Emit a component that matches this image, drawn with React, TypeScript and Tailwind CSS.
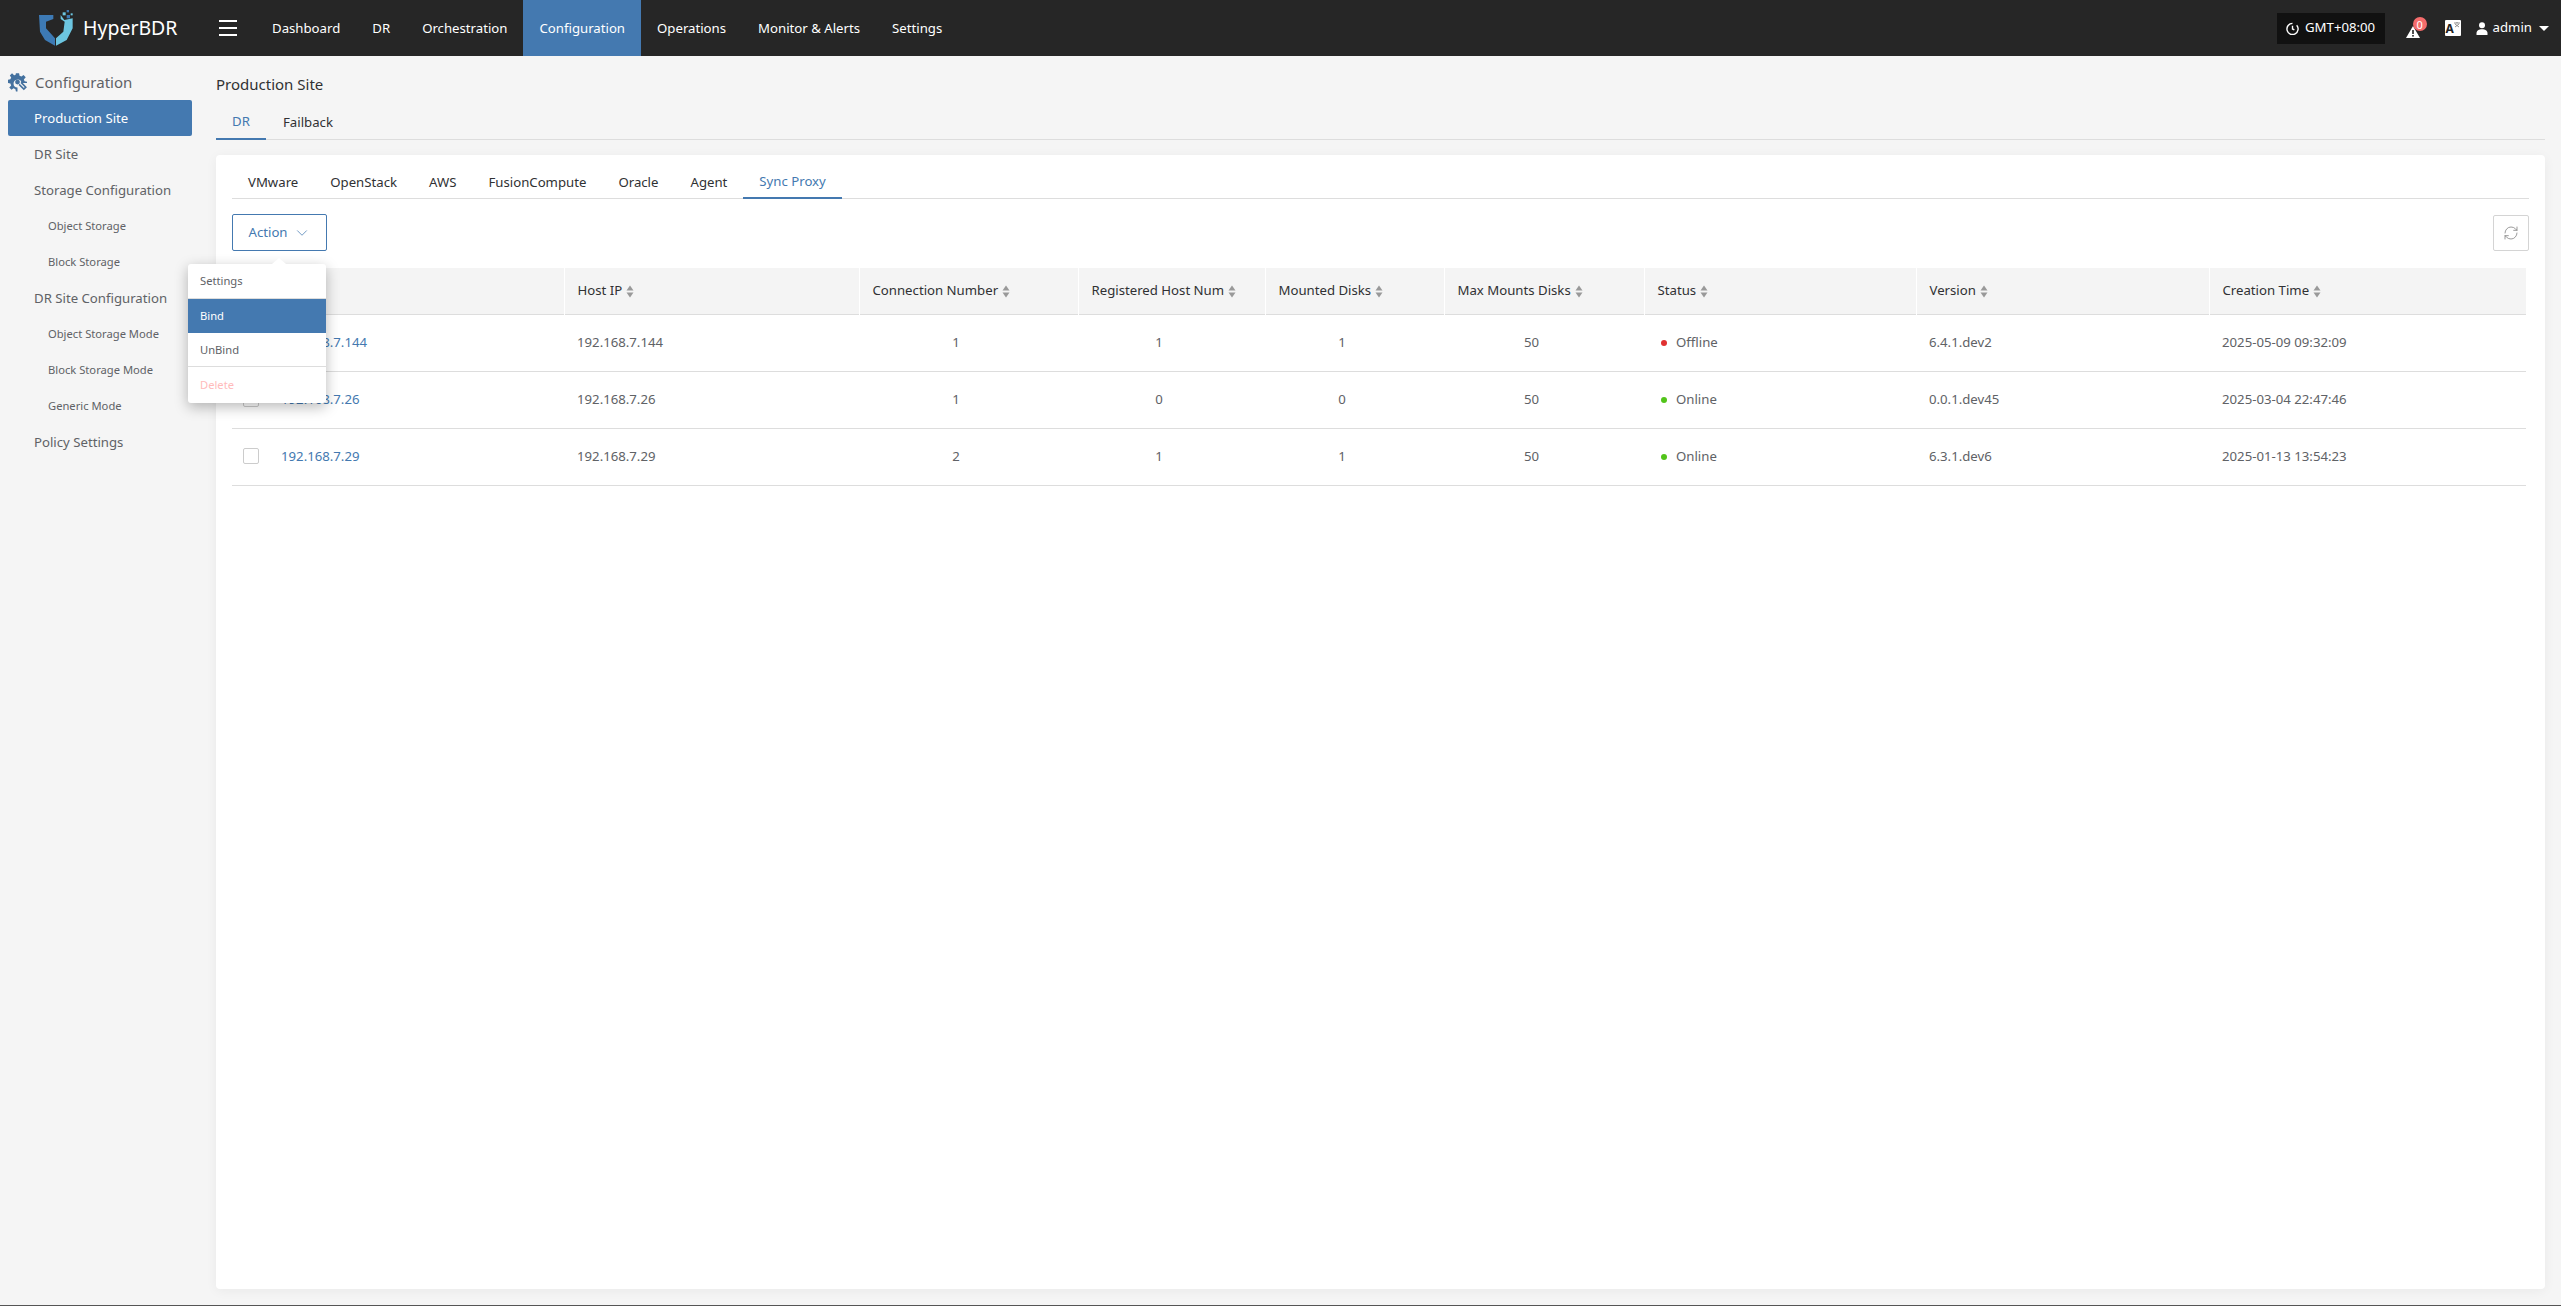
import { ChevronDown, RefreshCw } from "lucide-react";

const columns = [
  { title: "Name", width: "w-[332px]" },
  { title: "Host IP", width: "w-[295px]" },
  { title: "Connection Number", width: "w-[219px]" },
  { title: "Registered Host Num", width: "w-[187px]" },
  { title: "Mounted Disks", width: "w-[179px]" },
  { title: "Max Mounts Disks", width: "w-[200px]" },
  { title: "Status", width: "w-[272px]" },
  { title: "Version", width: "w-[293px]" },
  { title: "Creation Time", width: "" },
];

const rows = [
  { name: "192.168.7.144", conn: 1, hosts: 1, disks: 1, max: 50, online: false, version: "6.4.1.dev2", time: "2025-05-09 09:32:09" },
  { name: "192.168.7.26", conn: 1, hosts: 0, disks: 0, max: 50, online: true, version: "0.0.1.dev45", time: "2025-03-04 22:47:46" },
  { name: "192.168.7.29", conn: 2, hosts: 1, disks: 1, max: 50, online: true, version: "6.3.1.dev6", time: "2025-01-13 13:54:23" },
];

const navItems = ["Dashboard", "DR", "Orchestration", "Configuration", "Operations", "Monitor & Alerts", "Settings"];
const siteTabs = ["VMware", "OpenStack", "AWS", "FusionCompute", "Oracle", "Agent", "Sync Proxy"];

const sideItems = [
  { label: "Production Site", active: true },
  { label: "DR Site" },
  { label: "Storage Configuration" },
  { label: "Object Storage", sub: true },
  { label: "Block Storage", sub: true },
  { label: "DR Site Configuration" },
  { label: "Object Storage Mode", sub: true },
  { label: "Block Storage Mode", sub: true },
  { label: "Generic Mode", sub: true },
  { label: "Policy Settings" },
];

function Logo() {
  return (
    <svg width="35" height="36" viewBox="57 15 105 108" className="shrink-0">
      <path d="M57 30H100V42L78 50V70L105 100V122L75 105 60 80z" fill="#3d7ab5" />
      <path d="M108 122V100L130 80 134 50 122 42V30L133 45 158 40V70L140 105z" fill="#6cc5e0" />
      <rect x="128" y="22" width="9" height="9" fill="#6cc5e0" />
      <rect x="140" y="15" width="7" height="7" fill="#3d7ab5" />
      <rect x="140" y="30" width="10" height="10" fill="#3d7ab5" />
      <rect x="152" y="25" width="6" height="6" fill="#6cc5e0" />
    </svg>
  );
}

function SortIcon() {
  return (
    <svg width="8" height="13" viewBox="0 0 8 13" className="ml-[4px] inline-block shrink-0">
      <path d="M4 0.500 7.500 5.500H0.500z" fill="#999" />
      <path d="M4 12.500 0.500 7.500H7.500z" fill="#999" />
    </svg>
  );
}

function GearIcon() {
  return (
    <svg width="19" height="20" viewBox="0 0 24 24" className="shrink-0">
      <path
        d="M10 1h4l.6 3 2.400 1 2.600-1.700 2.800 2.800L20 8.700l1 2.300 3 .6v1.800h-7a5 5 0 1 0-5 5.600v5h-2l-.6-3-2.400-1-2.600 1.700-2.800-2.800L4 16.300l-1-2.300-3-.6v-4.200l3-.6 1-2.300-1.700-2.600 2.800-2.800L7.700 3.600 9.400 3z"
        fill="#44719f"
      />
      <circle cx="12" cy="12" r="3" fill="#44719f" />
      <path d="M14 15l6 6 2.500-2.500-6-6" fill="none" stroke="#44719f" strokeWidth="2" />
    </svg>
  );
}

function Dropdown() {
  return (
    <div className="absolute left-[-44px] top-[50px] z-10 w-[138px] rounded-[3px] bg-white text-[11.200px] shadow-[0_4px_14px_rgba(0,0,0,0.28)]">
      <div className="absolute left-[84px] top-[-6px] size-0 border-x-[7px] border-b-[6px] border-x-transparent border-b-white" />
      <div className="flex h-[35px] items-center border-b border-[#ddd] pl-[12px] pt-[1px] text-[#606266]">Settings</div>
      <div className="flex h-[34px] items-center bg-[#4479b0] pl-[12px] pt-[1px] text-white">Bind</div>
      <div className="flex h-[34px] items-center border-b border-[#ddd] pl-[12px] pt-[1px] text-[#606266]">UnBind</div>
      <div className="flex h-[36px] items-center pl-[12px] pt-[1px] text-[#fbb]">Delete</div>
    </div>
  );
}

export default function App() {
  return (
    <div className="flex h-[1306px] flex-col overflow-hidden border-b border-[#555] bg-[#f5f5f5] font-['Noto_Sans','Open_Sans',sans-serif] text-[13.200px]">
      <header className="flex h-[56px] shrink-0 items-center bg-[#262626] text-white">
        <div className="ml-[39px] flex w-[180px] items-center gap-[9px]">
          <Logo />
          <span className="text-[19.500px]">HyperBDR</span>
        </div>
        <div className="flex w-[18px] flex-col gap-[5px]">
          <span className="h-[2px] bg-white" />
          <span className="h-[2px] bg-white" />
          <span className="h-[2px] bg-white" />
        </div>
        <nav className="ml-[19px] flex h-full">
          {navItems.map((item) => (
            <a
              key={item}
              className={`flex items-center px-[16px] pt-[1px] ${item === "Configuration" ? "bg-[#4479b0]" : ""}`}
            >
              {item}
            </a>
          ))}
        </nav>
        <div className="ml-auto flex items-center pr-[12px]">
          <div className="flex h-[31px] w-[108px] items-center justify-center gap-[6px] bg-[#111]">
            <svg width="13" height="13" viewBox="0 0 14 14" fill="none" stroke="#fff" strokeWidth="1.500">
              <path d="M11.500 3.500a6 6 0 1 1-4.500-2M7 4v3.500l2 1" />
            </svg>
            <span>GMT+08:00</span>
          </div>
          <div className="relative ml-[21px] mt-[8px] h-[12px] w-[14px]">
            <svg width="14" height="12" viewBox="0 0 14 12" className="block">
              <path d="M7 0 14 12H0z" fill="#fff" />
              <rect x="6.200" y="4" width="1.600" height="4" fill="#262626" />
              <rect x="6.200" y="9" width="1.600" height="1.600" fill="#262626" />
            </svg>
            <span className="absolute left-[7px] top-[-9px] flex size-[14px] items-center justify-center rounded-full bg-[#f56c6c] text-[11px] leading-none">
              0
            </span>
          </div>
          <div className="relative ml-[25px] flex size-[16px] items-end rounded-[1px] bg-white pl-[1px] text-[12px] font-bold leading-[14px] text-[#222]">
            A
            <svg width="6" height="6" viewBox="0 0 6 6" className="absolute right-[1px] top-[2px]" stroke="#777" strokeWidth="0.800" fill="none">
              <path d="M0 1h6M3 0v1M1 2l4 3M5 2L1 5" />
            </svg>
          </div>
          <svg width="12" height="13" viewBox="0 0 12 13" fill="#fff" className="ml-[15px]">
            <circle cx="6" cy="3.200" r="3" />
            <path d="M0.500 13v-2c0-2.500 2.500-3.800 5.500-3.800s5.500 1.300 5.500 3.800v2z" />
          </svg>
          <span className="ml-[5px]">admin</span>
          <span className="ml-[7px] size-0 border-x-[5px] border-t-[5px] border-x-transparent border-t-white" />
        </div>
      </header>

      <div className="flex min-h-0 flex-1">
        <aside className="w-[216px] shrink-0 pl-[8px] pr-[24px]">
          <div className="flex h-[44px] items-center gap-[8px] pt-[8px] text-[15px] text-[#606266]">
            <GearIcon />
            Configuration
          </div>
          {sideItems.map((item) => (
            <div
              key={item.label}
              className={`flex h-[36px] items-center rounded-[2px] pt-[1px] ${item.sub ? "pl-[40px] text-[11.200px]" : "pl-[26px]"} ${item.active ? "bg-[#4479b0] text-white" : "text-[#606266]"}`}
            >
              {item.label}
            </div>
          ))}
        </aside>

        <main className="flex min-w-0 flex-1 flex-col pb-[16px] pr-[16px]">
          <h1 className="pt-[15px] text-[15px] font-normal leading-[26px] text-[#303133]">Production Site</h1>
          <div className="mt-[8px] flex h-[35px] border-b border-[#ddd] pt-[1px]">
            <div className="mb-[-1px] flex w-[50px] items-center justify-center border-b-2 border-[#4479b0] text-[#4479b0]">DR</div>
            <div className="flex items-center pl-[17px] text-[#303133]">Failback</div>
          </div>
          <section className="mt-[15px] flex min-h-0 flex-1 flex-col rounded-[4px] bg-white px-[16px] shadow-[0_2px_12px_rgba(0,0,0,0.05)]">
            <div className="flex h-[44px] shrink-0 border-b border-[#ddd]">
              {siteTabs.map((tab) => (
                <div
                  key={tab}
                  className={`mb-[-1px] flex items-center px-[16px] pt-[11px] ${tab === "Sync Proxy" ? "border-b-2 border-[#4479b0] text-[#4479b0]" : "text-[#303133]"}`}
                >
                  {tab}
                </div>
              ))}
            </div>
            <div className="mt-[15px] flex h-[37px] shrink-0 items-center justify-between">
              <div className="relative">
                <button className="flex h-[37px] w-[95px] items-center justify-center gap-[5px] rounded-[2px] border border-[#4479b0] pt-[1px] text-[#4479b0]">
                  Action
                  <ChevronDown size={18} strokeWidth={1} />
                </button>
                <Dropdown />
              </div>
              <button className="flex h-[36px] w-[36px] items-center justify-center rounded-[2px] border border-[#d4d4d4] text-[#888]">
                <RefreshCw size={16} strokeWidth={1.250} />
              </button>
            </div>
            <table className="mt-[17px] w-[2294px] table-fixed border-collapse">
              <thead>
                <tr className="h-[46px] border-b border-[#ddd] bg-[#f4f4f4] text-left">
                  {columns.map((col, i) => (
                    <th
                      key={col.title}
                      className={`p-0 pl-[13px] pt-[1px] font-normal text-[#303133] ${col.width} ${i > 0 ? "border-l border-white" : ""}`}
                    >
                      <span className="flex items-center">
                        {col.title}
                        <SortIcon />
                      </span>
                    </th>
                  ))}
                </tr>
              </thead>
              <tbody className="text-[#606266]">
                {rows.map((row) => (
                  <tr key={row.name} className="h-[57px] border-b border-[#ddd]">
                    <td className="p-0 pl-[11px]">
                      <div className="flex items-center gap-[22px]">
                        <span className="size-[16px] rounded-[2px] border border-[#ccc] bg-white" />
                        <a className="pt-[1px] text-[#4479b0]">{row.name}</a>
                      </div>
                    </td>
                    <td className="p-0 pl-[13px] pt-[1px]">{row.name}</td>
                    <td className="p-0 pl-[13px] pr-[38px] pt-[1px] text-center">{row.conn}</td>
                    <td className="p-0 pl-[13px] pr-[38px] pt-[1px] text-center">{row.hosts}</td>
                    <td className="p-0 pl-[13px] pr-[38px] pt-[1px] text-center">{row.disks}</td>
                    <td className="p-0 pl-[13px] pr-[38px] pt-[1px] text-center">{row.max}</td>
                    <td className="p-0 pl-[13px] pt-[1px]">
                      <span className="flex items-center gap-[9px] pl-[4px]">
                        <span className={`size-[6px] rounded-full ${row.online ? "bg-[#52c41a]" : "bg-[#e03131]"}`} />
                        {row.online ? "Online" : "Offline"}
                      </span>
                    </td>
                    <td className="p-0 pl-[13px] pt-[1px]">{row.version}</td>
                    <td className="p-0 pl-[13px] pt-[1px]">{row.time}</td>
                  </tr>
                ))}
              </tbody>
            </table>
          </section>
        </main>
      </div>
    </div>
  );
}
